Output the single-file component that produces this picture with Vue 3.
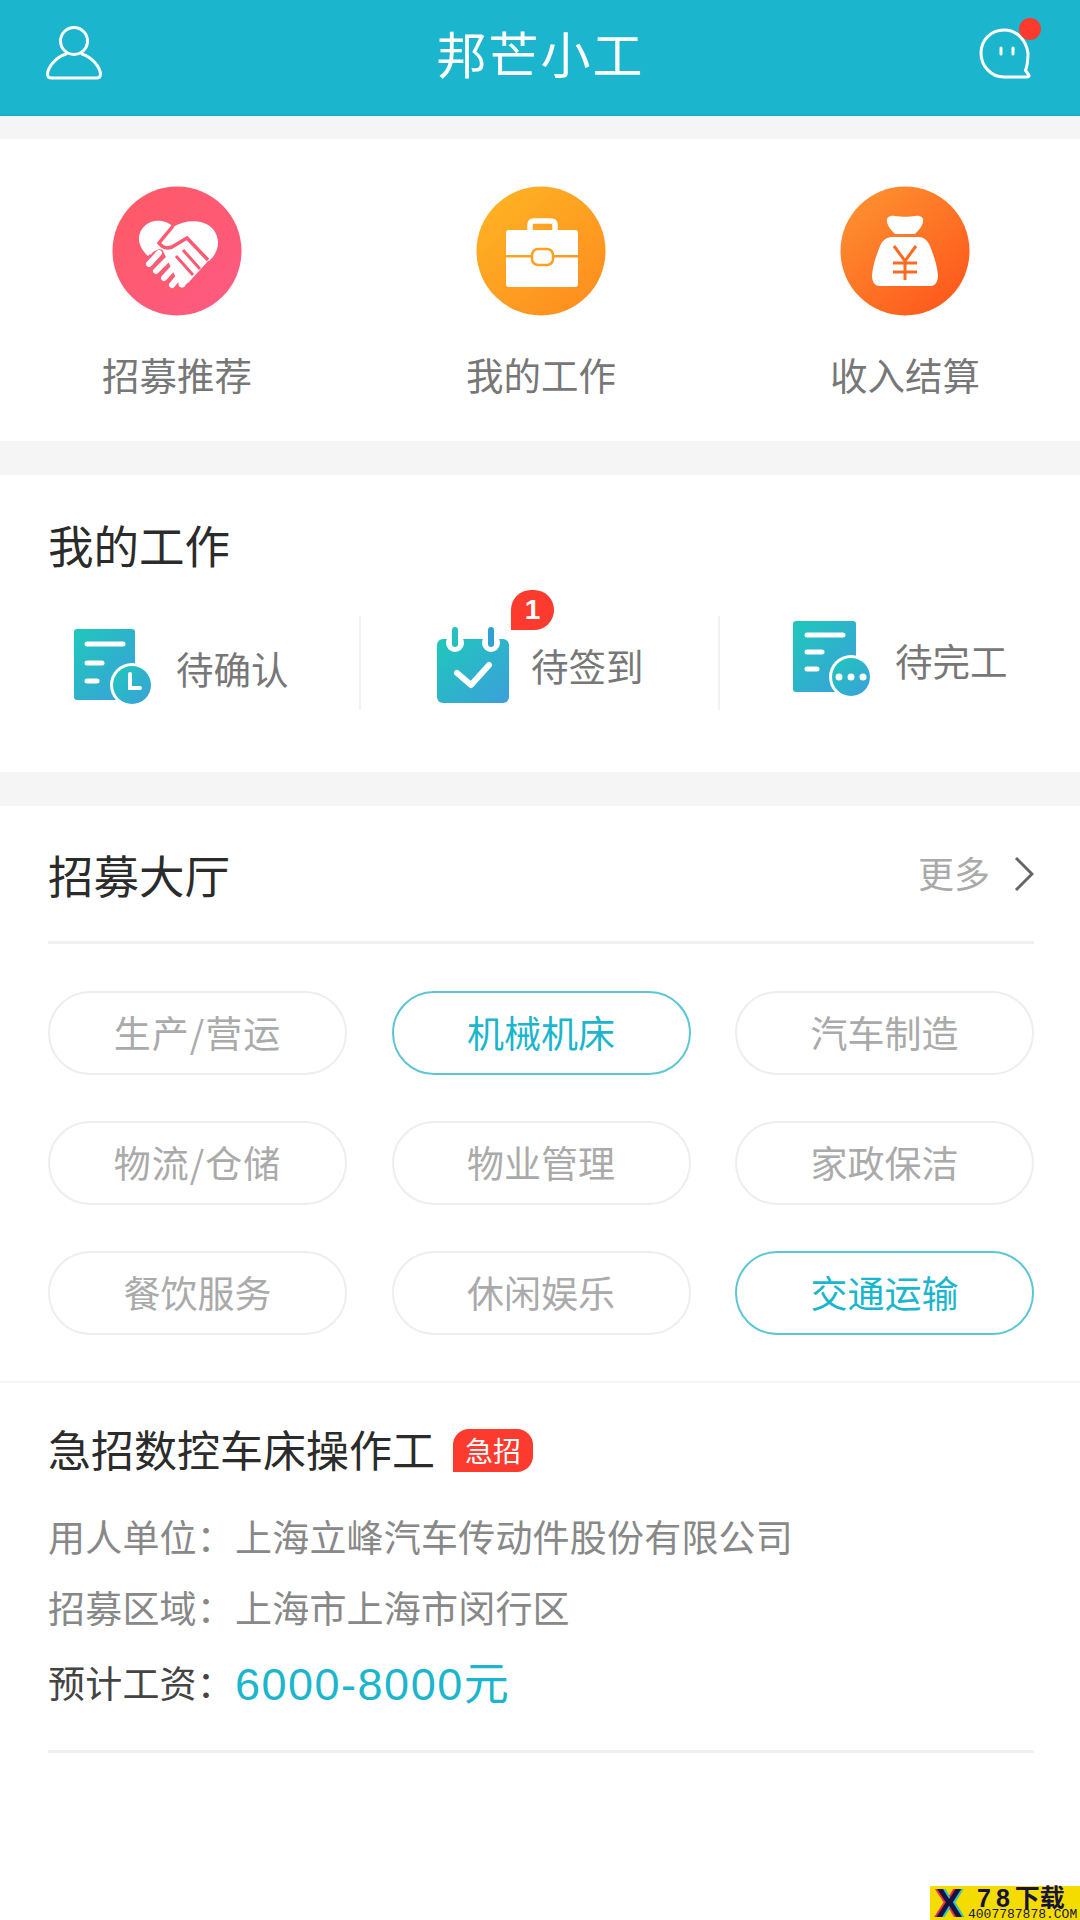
<template>
  <div class="page">
    <header class="top-bar">
      <svg class="top-icon user" viewBox="0 0 56 54" fill="none" stroke="#fff" stroke-width="3">
        <circle cx="28" cy="15" r="13.500" />
        <path d="M20 28C10 31 2 41 1.500 48c0 3 1.500 4 4 4h45c2.500 0 4-1 4-4C54 41 46 31 36 28" stroke-linecap="round" />
      </svg>
      <h1 class="app-title">邦芒小工</h1>
      <div class="msg-wrap">
        <svg class="top-icon msg" viewBox="0 0 58 58" fill="none" stroke="#fff" stroke-width="3">
          <path d="M25 4C12 4 2 14 2 27c0 13 10 24 23 24h23c2 0 2.500-1 1.500-2.500l-3-4c1.500-4 2.500-10 2.500-17.500C47 14 38 4 25 4Z" stroke-linejoin="round" />
          <path d="M22 22v6M34 22v6" stroke-linecap="round" />
        </svg>
        <span class="msg-dot"></span>
      </div>
    </header>

    <section class="entries">
      <div class="entry">
        <svg class="entry-icon" viewBox="0 0 130 130">
          <defs>
            <linearGradient id="gPink" x1="0.15" y1="0.1" x2="0.85" y2="0.9">
              <stop offset="0" stop-color="#fe5a68" />
              <stop offset="1" stop-color="#fd5a80" />
            </linearGradient>
          </defs>
          <circle cx="65" cy="65" r="64.500" fill="url(#gPink)" />
          <path d="M61 41C54 33 38 32 30 43c-6 9-3 19 7 28l4-5 6-3 50 12 1-1c9-8 11-21 3-31-9-10-27-10-40-2Z" fill="#fff" />
          <path d="M50 63l12 0 14-10 21 21-20 22-8 6-19-39Z" fill="#fff" />
          <path d="M61 40L47 57q5 7 13 4l15-9 21 22" fill="none" stroke="#fe5a72" stroke-width="3.500" />
          <path d="M64 70l17 19M71 64l17 19" fill="none" stroke="#fe5a72" stroke-width="3" />
          <path d="M38 68l34 36-12 4-30-32Z" fill="#fe5a74" />
          <path d="M37 78l10-11M44 85l12-12M52 92l11-12M60 99l10-12" stroke="#fff" stroke-width="6" stroke-linecap="round" />
          <circle cx="70" cy="98" r="3.500" fill="#fff" />
        </svg>
        <span class="entry-name">招募推荐</span>
      </div>
      <div class="entry">
        <svg class="entry-icon" viewBox="0 0 130 130">
          <defs>
            <linearGradient id="gOrange" x1="0.15" y1="0.1" x2="0.85" y2="0.9">
              <stop offset="0" stop-color="#feb123" />
              <stop offset="1" stop-color="#fe8f1f" />
            </linearGradient>
          </defs>
          <circle cx="65" cy="65" r="64.500" fill="url(#gOrange)" />
          <path d="M54 44v-5q0-4 4-4h17q4 0 4 4v5" fill="none" stroke="#fff" stroke-width="5.500" />
          <path d="M30 47q0-3 3-3h66q3 0 3 3v22H30ZM30 71.500h72v26.500q0 3-3 3H33q-3 0-3-3Z" fill="#fff" />
          <rect x="56" y="63" width="21" height="16" rx="6" fill="#fff" stroke="#fea020" stroke-width="2.500" />
        </svg>
        <span class="entry-name">我的工作</span>
      </div>
      <div class="entry">
        <svg class="entry-icon" viewBox="0 0 130 130">
          <defs>
            <linearGradient id="gRed" x1="0.15" y1="0.1" x2="0.85" y2="0.9">
              <stop offset="0" stop-color="#fe8e2f" />
              <stop offset="1" stop-color="#fe5a1c" />
            </linearGradient>
          </defs>
          <circle cx="65" cy="65" r="64.500" fill="url(#gRed)" />
          <path d="M47 36c-1-5 3-7 8-6 6 1 14 1 20 0 5-1 9 1 8 6-1 5-5 9-8 12H55c-3-3-7-7-8-12Z" fill="#fff" />
          <path d="M52 51h27c5 0 9 4 11 9 3 8 7 18 8 29 0 6-2 11-8 11H40c-6 0-8-5-8-11 1-11 5-21 8-29 2-5 6-9 12-9Z" fill="#fff" />
          <path d="M54 60l11 15 11-15M65 75v19M53 77h24M53 86h24" fill="none" stroke="#fe6a22" stroke-width="3" />
        </svg>
        <span class="entry-name">收入结算</span>
      </div>
    </section>

    <section class="my-work">
      <h2 class="sec-title">我的工作</h2>
      <div class="status-row">
        <div class="status s1">
          <svg class="status-icon" width="80" height="78" viewBox="0 0 80 78">
            <defs>
              <linearGradient id="gTeal1" x1="0" y1="0" x2="1" y2="1">
                <stop offset="0" stop-color="#1fc8bb" />
                <stop offset="1" stop-color="#3b9fdb" />
              </linearGradient>
            </defs>
            <path d="M3 0h55q3 0 3 3v68H3q-3 0-3-3V3q0-3 3-3Z" fill="url(#gTeal1)" />
            <path d="M13 15h36M13 34h15M13 52h10" stroke="#fff" stroke-width="5" stroke-linecap="round" />
            <circle cx="58" cy="56" r="22" fill="#fff" />
            <circle cx="58" cy="56" r="19" fill="url(#gTeal1)" />
            <path d="M56 45v14h10" fill="none" stroke="#fff" stroke-width="4" stroke-linecap="round" />
          </svg>
          <span class="status-name">待确认</span>
        </div>
        <div class="status s2">
          <div class="cal-wrap">
            <svg class="status-icon" width="72" height="76" viewBox="0 0 72 76">
              <defs>
                <linearGradient id="gTeal2" x1="0" y1="0" x2="1" y2="1">
                  <stop offset="0" stop-color="#1fc8bb" />
                  <stop offset="1" stop-color="#3b9fdb" />
                </linearGradient>
              </defs>
              <rect x="0" y="12" width="72" height="64" rx="6" fill="url(#gTeal2)" />
              <circle cx="18" cy="16" r="9" fill="#fff" />
              <circle cx="54" cy="16" r="9" fill="#fff" />
              <path d="M18 3v14" stroke="#25c1c0" stroke-width="6" stroke-linecap="round" />
              <path d="M54 3v14" stroke="#2f9fd8" stroke-width="6" stroke-linecap="round" />
              <path d="M20 46l14 12 18-20" fill="none" stroke="#fff" stroke-width="6" stroke-linecap="round" stroke-linejoin="round" />
            </svg>
            <span class="count">1</span>
          </div>
          <span class="status-name">待签到</span>
        </div>
        <div class="status s3">
          <svg class="status-icon" width="80" height="78" viewBox="0 0 80 78">
            <path d="M3 0h57q3 0 3 3v68H3q-3 0-3-3V3q0-3 3-3Z" fill="url(#gTeal1)" />
            <path d="M14 14h36M14 31h15M14 48h10" stroke="#fff" stroke-width="5" stroke-linecap="round" />
            <circle cx="58" cy="56" r="22" fill="#fff" />
            <circle cx="58" cy="56" r="19" fill="url(#gTeal1)" />
            <circle cx="46" cy="56" r="3.500" fill="#fff" />
            <circle cx="58" cy="56" r="3.500" fill="#fff" />
            <circle cx="70" cy="56" r="3.500" fill="#fff" />
          </svg>
          <span class="status-name">待完工</span>
        </div>
      </div>
    </section>

    <section class="hall">
      <div class="hall-head">
        <h2 class="sec-title">招募大厅</h2>
        <div class="more">
          <span class="more-text">更多</span>
          <svg width="20" height="36" viewBox="0 0 20 36" fill="none" stroke="#666" stroke-width="3">
            <path d="M2 2l16 16L2 34" />
          </svg>
        </div>
      </div>
      <div class="chips">
        <div v-for="c in categories" :key="c.name" class="chip" :class="{ on: c.on, wide: c.name.includes('/') }">{{ c.name }}</div>
      </div>
      <div class="job">
        <div class="job-title">
          <span>急招数控车床操作工</span>
          <span class="urgent">急招</span>
        </div>
        <div class="job-row r1"><span class="job-label">用人单位：</span>上海立峰汽车传动件股份有限公司</div>
        <div class="job-row r2"><span class="job-label">招募区域：</span>上海市上海市闵行区</div>
        <div class="job-row r3"><span class="job-label">预计工资：</span><span class="salary">6000-8000元</span></div>
      </div>
      <div class="job-end"></div>
    </section>

    <div class="watermark">
      <span class="wm-x">X</span>
      <div class="wm-text">
        <span class="wm-top"><span class="wm-num">78</span>下载</span>
        <span class="wm-bot">4007787878.COM</span>
      </div>
    </div>
  </div>
</template>

<script setup>
const categories = [
  { name: '生产/营运' },
  { name: '机械机床', on: true },
  { name: '汽车制造' },
  { name: '物流/仓储' },
  { name: '物业管理' },
  { name: '家政保洁' },
  { name: '餐饮服务' },
  { name: '休闲娱乐' },
  { name: '交通运输', on: true }
]
</script>

<style scoped>
.page { position: relative; width: 1080px; height: 1920px; overflow: hidden; background: #f5f5f5; display: flex; flex-direction: column; font-family: "Noto Sans CJK SC", "Liberation Sans", sans-serif; }

.top-bar { height: 116px; box-sizing: border-box; background: #1bb6cd; border-bottom: 2px solid #15b0c8; display: flex; align-items: center; justify-content: space-between; padding: 0 43px 10px 46px; }
.top-icon.user { width: 56px; height: 54px; margin-top: 2px; }
.app-title { margin: 0; font-size: 50px; font-weight: 400; color: #fff; letter-spacing: 2px; }
.msg-wrap { position: relative; width: 58px; height: 58px; margin-top: 6px; }
.top-icon.msg { width: 58px; height: 58px; }
.msg-dot { position: absolute; right: -4px; top: -8px; width: 22px; height: 22px; border-radius: 50%; background: #fc3a2e; }

.entries { margin-top: 23px; height: 302px; box-sizing: border-box; background: #fff; display: flex; justify-content: space-between; padding: 47px 100px 0 102px; }
.entry { width: 150px; display: flex; flex-direction: column; align-items: center; }
.entry-icon { width: 130px; height: 130px; }
.entry-name { margin-top: 31px; font-size: 37.500px; line-height: 54px; color: #777; white-space: nowrap; }

.my-work { margin-top: 34px; height: 297px; box-sizing: border-box; background: #fff; padding-top: 39px; }
.sec-title { margin: 0; font-size: 45.500px; line-height: 60px; font-weight: 400; color: #2b2b2b; }
.my-work .sec-title { padding-left: 48px; }
.status-row { margin-top: 42px; height: 94px; display: flex; }
.status { box-sizing: border-box; display: flex; align-items: center; height: 94px; }
.status-name { font-size: 37.500px; color: #777; white-space: nowrap; line-height: 50px; }
.s1 { width: 361px; padding: 10px 0 0 74px; border-right: 2px solid #f2f2f2; }
.s1 .status-name { margin-left: 22px; }
.s2 { width: 359px; padding: 4px 0 0 76px; border-right: 2px solid #f2f2f2; }
.s2 .status-name { margin-left: 22px; }
.s3 { flex: 1; padding: 0 0 6px 73px; }
.s3 .status-name { margin-left: 22px; }
.cal-wrap { position: relative; width: 72px; height: 76px; }
.count { position: absolute; left: 74px; top: -37px; width: 43px; height: 40px; border-radius: 20px 20px 20px 0; background: #fc3a2e; color: #fff; font-family: "Liberation Sans", sans-serif; font-weight: 700; font-size: 28px; line-height: 40px; text-align: center; }

.hall { margin-top: 34px; flex: 1; background: #fff; }
.hall-head { margin: 0 46px 0 48px; height: 138px; box-sizing: border-box; border-bottom: 3px solid #f0f0f0; display: flex; align-items: center; justify-content: space-between; }
.more { display: flex; align-items: center; gap: 24px; font-size: 36px; color: #aaa; }
.more-text { padding-bottom: 4px; }
.chips { margin: 47px 45px 0 48px; display: grid; grid-template-columns: repeat(3, 299px); grid-auto-rows: 84px; column-gap: 44.500px; row-gap: 46px; }
.chip { box-sizing: border-box; border: 2px solid #eee; border-radius: 42px; padding-bottom: 3px; display: flex; align-items: center; justify-content: center; font-size: 37px; color: #aaa; }
.chip.wide { letter-spacing: 1px; }
.chip.on { border-color: #5cc6d6; color: #1bb6cd; }

.job { margin-top: 46px; border-top: 2px solid #f6f6f6; padding: 35px 46px 0 48px; }
.job-title { height: 60px; display: flex; align-items: center; font-size: 43px; color: #2b2b2b; }
.urgent { margin: 4px 0 0 18px; width: 80px; height: 43px; border-radius: 16px 16px 16px 0; background: #fc3a2e; color: #fff; font-size: 28px; line-height: 43px; text-align: center; }
.job-row { display: flex; align-items: center; height: 50px; font-size: 37px; letter-spacing: 0.200px; color: #888; }
.job-label { width: 187px; flex: none; }
.r1 { margin-top: 33px; }
.r2 { margin-top: 21px; }
.r3 { margin-top: 25px; }
.r3 .job-label { color: #444; }
.salary { padding-bottom: 3px; font-family: "Liberation Sans", "Noto Sans CJK SC", sans-serif; font-size: 45px; letter-spacing: 1.500px; color: #1bb6cd; }
.job-end { margin: 43px 46px 0 48px; height: 3px; background: #f0f0f0; }

.watermark { position: absolute; right: 0; bottom: 0; width: 150px; height: 34px; background: #f5dc00; display: flex; }
.wm-x { width: 38px; font-family: "Liberation Sans", sans-serif; font-weight: 700; font-size: 40px; line-height: 34px; color: #14143c; text-align: center; text-shadow: 2px 0 0 #37c8e6, -2px 0 0 #e6324b; }
.wm-text { display: flex; flex-direction: column; color: #14143c; white-space: nowrap; }
.wm-top { padding-left: 9px; font-family: "Liberation Sans", "Noto Sans CJK SC", sans-serif; font-weight: 700; font-size: 25px; line-height: 24px; }
.wm-num { letter-spacing: 5px; }
.wm-bot { font-family: "Liberation Mono", monospace; font-size: 13px; line-height: 10px; }
</style>
